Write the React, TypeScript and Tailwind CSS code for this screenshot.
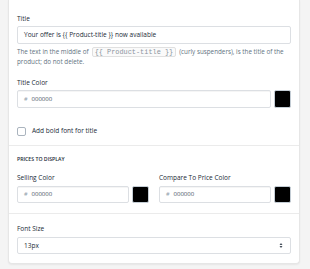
import React from "react";

const font = { fontFamily: '"Open Sans", "Liberation Sans", sans-serif' };

function Label({ children }: { children: React.ReactNode }) {
  return <div className="h-[10px] leading-[10px] text-[6.5px] text-[#212b36]">{children}</div>;
}

function ColorInput({ h = "h-[18px]" }: { h?: string }) {
  return (
    <div className="flex gap-[3px]">
      <div className={`flex-1 ${h} border border-[#dcdfe3] rounded-[2px] bg-white flex items-center pl-[6px] text-[6px] shadow-[inset_0_1px_0_rgba(0,0,0,0.04)]`}>
        <span className="text-[#919eab] mr-[4px] text-[5.5px]">#</span>
        <span className="text-[#454f5b]">000000</span>
      </div>
      <div className={`w-[17px] ${h} bg-black rounded-[2px] border border-[#c4cdd5]`} />
    </div>
  );
}

export default function App() {
  return (
    <div className="w-[310px] h-[269px] bg-[#f4f4f4] overflow-hidden" style={font}>
      <div className="ml-[8px] w-[292px] bg-white rounded-b-[4px] border-x border-b border-[#e6e6e6] shadow-[0_1px_2px_rgba(0,0,0,0.06)]">
        <div className="px-[8px] pt-[14px] pb-[9px] border-b border-[#ebebeb]">
          <Label>Title</Label>
          <div className="mt-[2px] h-[18px] border border-[#dcdfe3] rounded-[2px] flex items-center pl-[6px] text-[6.5px] text-[#212b36]">
            Your offer is {"{{"} Product-title {"}}"} now available
          </div>
          <div className="mt-[3px] text-[6.3px] leading-[10px] text-[#637381]">
            <div className="flex items-center h-[10px] whitespace-nowrap">
              <span>The text in the middle of</span>
              <span
                className="h-[10px] leading-[8px] px-[2px] mx-[3px] border border-[#e0e0e0] rounded-[2px] bg-[#fafafa] text-[6.9px] text-[#8a949e]"
                style={{ fontFamily: '"Liberation Mono", monospace' }}
              >
                {"{{ Product-title }}"}
              </span>
              <span>(curly suspenders), is the title of the</span>
            </div>
            <div className="h-[10px]">product; do not delete.</div>
          </div>
          <div className="mt-[11px]">
            <Label>Title Color</Label>
            <div className="mt-[2px]">
              <ColorInput />
            </div>
          </div>
          <div className="mt-[18px] flex items-center gap-[6px] h-[10px]">
            <div className="w-[9px] h-[9px] border border-[#aab4be] rounded-[2px] bg-white" />
            <span className="text-[6.5px] text-[#212b36]">Add bold font for title</span>
          </div>
        </div>
        <div className="px-[8px] pt-[8px] pb-[10px] border-b border-[#ebebeb]">
          <div className="h-[10px] leading-[10px] text-[5.2px] font-semibold text-[#212b36] uppercase">Prices to display</div>
          <div className="mt-[9px] flex gap-[10px]">
            <div className="flex-1">
              <Label>Selling Color</Label>
              <div className="mt-[3px]">
                <ColorInput h="h-[17px]" />
              </div>
            </div>
            <div className="flex-1">
              <Label>Compare To Price Color</Label>
              <div className="mt-[3px]">
                <ColorInput h="h-[17px]" />
              </div>
            </div>
          </div>
        </div>
        <div className="px-[8px] pt-[10px] pb-[9px]">
          <Label>Font Size</Label>
          <div className="mt-[3px] h-[17px] border border-[#dcdfe3] rounded-[2px] flex items-center justify-between pl-[6px] pr-[7px] text-[6.5px] text-[#212b36]">
            <span>13px</span>
            <svg width="4" height="7" viewBox="0 0 4 7">
              <path d="M0.5 3 L2 1 L3.5 3 Z" fill="#454f5b" />
              <path d="M0.5 4 L2 6 L3.5 4 Z" fill="#454f5b" />
            </svg>
          </div>
        </div>
      </div>
    </div>
  );
}
